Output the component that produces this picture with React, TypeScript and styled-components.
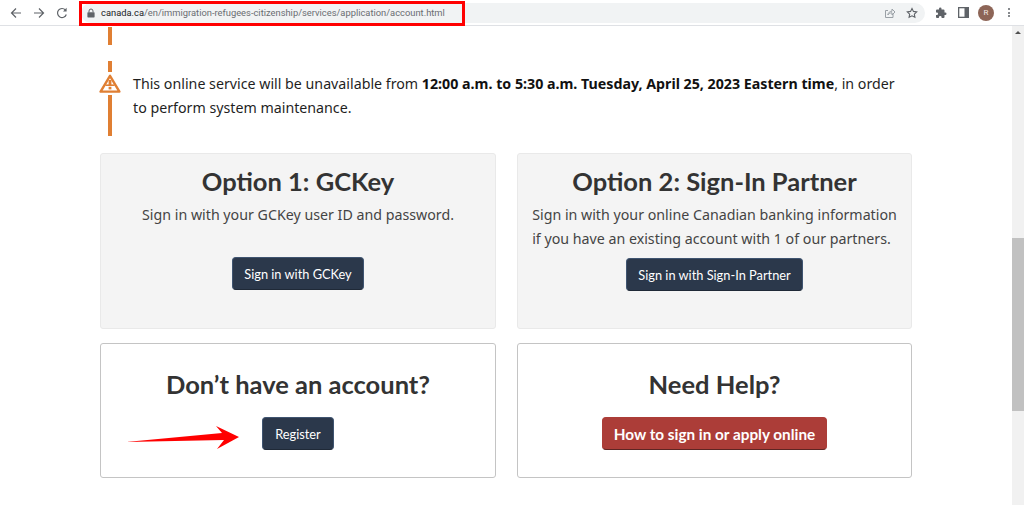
import React from "react";
import styled, { createGlobalStyle } from "styled-components";

const Global = createGlobalStyle`
  html, body { margin: 0; padding: 0; background: #fff; }
  body { width: 1024px; height: 505px; overflow: hidden; font-family: "Noto Sans", sans-serif; }
`;

const Screen = styled.div`
  position: relative;
  width: 1024px;
  height: 505px;
  overflow: hidden;
  display: flex;
  flex-direction: column;
`;

const Toolbar = styled.header`
  height: 26px;
  flex: none;
  display: flex;
  align-items: center;
  box-sizing: border-box;
  border-bottom: 1px solid #dfe1e5;
  background: #fff;
  padding-left: 10px;
`;

const NavGroup = styled.div`
  display: flex;
  align-items: center;
  gap: 11px;
  width: 71px;
  flex: none;
  color: #5f6368;
`;

const AddressBar = styled.div`
  width: 844px;
  height: 20px;
  flex: none;
  border-radius: 10px;
  background: #f1f3f4;
  display: flex;
  align-items: center;
  padding: 0 7px 0 6px;
  box-sizing: border-box;
  color: #5f6368;
`;

const Url = styled.span`
  font: 9.35px/1 Roboto, sans-serif;
  color: #6a6d72;
  margin-left: 6px;
  white-space: nowrap;
  flex: 1;
`;

const Host = styled.b`
  font-weight: 400;
  color: #202124;
`;

const BarActions = styled.div`
  display: flex;
  align-items: center;
  gap: 10px;
`;

const ToolActions = styled.div`
  display: flex;
  align-items: center;
  gap: 11px;
  margin-left: 10px;
  color: #5f6368;
`;

const Avatar = styled.span`
  width: 16px;
  height: 16px;
  border-radius: 50%;
  background: #8d6557;
  color: #f3e9e5;
  font: 8px/16px Roboto, sans-serif;
  text-align: center;
  margin-left: -2px;
`;

const Dots = styled.span`
  display: flex;
  flex-direction: column;
  gap: 1.5px;
  margin-left: 3px;
  & i { width: 2px; height: 2px; border-radius: 50%; background: #5f6368; display: block; }
`;

const Body = styled.div`
  flex: 1;
  display: flex;
  min-height: 0;
`;

const Page = styled.main`
  flex: 1;
  padding: 1px 100px 0 100px;
  box-sizing: border-box;
`;

const Scrollbar = styled.aside`
  width: 12px;
  flex: none;
  background: #f1f1f1;
  display: flex;
  flex-direction: column;
  padding-top: 212px;
  box-sizing: border-box;
  position: relative;
`;

const ScrollArrow = styled.span`
  position: absolute;
  top: 5px;
  left: 3px;
  width: 0;
  height: 0;
  border-left: 3px solid transparent;
  border-right: 3px solid transparent;
  border-bottom: 3px solid #505050;
`;

const ScrollThumb = styled.div`
  height: 173px;
  background: #c1c1c1;
`;

const Notice = styled.section`
  display: flex;
  height: 126px;
`;

const Rail = styled.div`
  width: 22px;
  margin-right: 11px;
  flex: none;
  display: flex;
  flex-direction: column;
  align-items: center;
  padding-right: 2px;
  box-sizing: border-box;
`;

const RailBar = styled.span<{ $h: number; $mb?: number }>`
  width: 4px;
  height: ${(p) => p.$h}px;
  margin-bottom: ${(p) => p.$mb ?? 0}px;
  background: #e07f33;
  display: block;
  flex: none;
`;

const WarnIcon = styled.svg`
  flex: none;
  margin-bottom: 2px;
`;

const NoticeText = styled.p`
  margin: 45px 0 0 0;
  font-size: 14.22px;
  line-height: 24px;
  color: #1f1f1f;
  width: 770px;
  & b { font-weight: 700; color: #111; }
`;

const Grid = styled.div`
  display: grid;
  grid-template-columns: 396px 395px;
  grid-template-rows: 176px 135px;
  column-gap: 21px;
  row-gap: 14px;
`;

const Card = styled.article<{ $filled?: boolean }>`
  box-sizing: border-box;
  border: 1px solid ${(p) => (p.$filled ? "#e9e9e9" : "#c4c4c4")};
  border-radius: 3px;
  background: ${(p) => (p.$filled ? "#f4f4f4" : "#fff")};
  display: flex;
  flex-direction: column;
  align-items: center;
`;

const Title = styled.h2<{ $top: number; $bottom: number }>`
  margin: ${(p) => p.$top}px 0 ${(p) => p.$bottom}px;
  font-family: Lato, sans-serif;
  font-weight: 700;
  font-size: 25.5px;
  line-height: 36px;
  color: #333;
`;

const Lead = styled.p`
  margin: 0;
  font-size: 14.22px;
  line-height: 24px;
  color: #444;
`;

const Button = styled.a<{ $top: number; $danger?: boolean; $pad?: number }>`
  margin-top: ${(p) => p.$top}px;
  box-sizing: border-box;
  height: 33px;
  padding: 0 ${(p) => p.$pad ?? 11}px;
  display: inline-flex;
  align-items: center;
  border-radius: 4px;
  font-family: Lato, sans-serif;
  font-weight: ${(p) => (p.$danger ? 700 : 400)};
  font-size: ${(p) => (p.$danger ? 15.3 : 12.8)}px;
  color: #fff;
  background: ${(p) => (p.$danger ? "#ac3d38" : "#2b384b")};
  border: 1px solid ${(p) => (p.$danger ? "#ac3d38" : "#3f5470")};
  border-bottom-color: ${(p) => (p.$danger ? "#5e2523" : "#1f2937")};
`;

const Highlight = styled.div`
  position: absolute;
  left: 79px;
  top: 1px;
  width: 386px;
  height: 25px;
  box-sizing: border-box;
  border: 3px solid #f00;
  pointer-events: none;
`;

const ArrowMark = styled.svg`
  position: absolute;
  left: 125px;
  top: 426px;
`;

const Back = () => (
  <svg width="12" height="12" viewBox="0 0 12 12" fill="none" stroke="currentColor" strokeWidth="1.2"><path d="M11 6H1.5M6 1.5 1.5 6 6 10.5" /></svg>
);
const Forward = () => (
  <svg width="12" height="12" viewBox="0 0 12 12" fill="none" stroke="currentColor" strokeWidth="1.2"><path d="M1 6h9.5M6 1.5 10.5 6 6 10.5" /></svg>
);
const Reload = () => (
  <svg width="12" height="12" viewBox="0 0 12 12" fill="none" stroke="currentColor" strokeWidth="1.2"><path d="M10.3 7.5A4.5 4.5 0 1 1 9.4 3" /><path d="M10.6 .8v3.6H7z" fill="currentColor" stroke="none" /></svg>
);
const Lock = () => (
  <svg width="8" height="10" viewBox="0 0 8 10"><path d="M1 4.2h6a.6.6 0 0 1 .6.6v4a.6.6 0 0 1-.6.6H1a.6.6 0 0 1-.6-.6v-4a.6.6 0 0 1 .6-.6z" fill="currentColor" /><path d="M2 4.2V3a2 2 0 0 1 4 0v1.2" fill="none" stroke="currentColor" /></svg>
);
const Share = () => (
  <svg width="12" height="12" viewBox="0 0 12 12" fill="none" stroke="#9aa0a6" strokeWidth="1"><path d="M9 6.5v4H1.5V3.5H4" /><path d="M3.8 8C4.2 5.5 6 4.2 8 4.2V2l3 3-3 3V5.8C6.2 5.8 5 6.5 3.8 8z" /></svg>
);
const Star = () => (
  <svg width="12" height="12" viewBox="0 0 24 24" fill="none" stroke="currentColor" strokeWidth="2.2"><path d="m12 2.8 2.9 6 6.5.9-4.7 4.5 1.1 6.5-5.8-3.1-5.8 3.1 1.1-6.5-4.7-4.5 6.5-.9z" /></svg>
);
const Puzzle = () => (
  <svg width="12" height="12" viewBox="0 0 24 24" fill="currentColor"><path d="M20.5 11H19V7a2 2 0 0 0-2-2h-4V3.5a2.5 2.5 0 0 0-5 0V5H4a2 2 0 0 0-2 2v3.8h1.5a2.7 2.7 0 0 1 0 5.4H2V20a2 2 0 0 0 2 2h3.8v-1.5a2.7 2.7 0 0 1 5.4 0V22H17a2 2 0 0 0 2-2v-4h1.5a2.5 2.5 0 0 0 0-5z" /></svg>
);
const SidePanel = () => (
  <svg width="11" height="11" viewBox="0 0 11 11"><path d="M0 0h11v11H0z" fill="#5f6368" /><path d="M1.3 1.3h5.2v8.4H1.3z" fill="#fff" /></svg>
);
const Warning = () => (
  <WarnIcon width="22" height="19" viewBox="0 0 22 19" fill="none">
    <path d="M11 1.8 1.6 17.6h18.8z" stroke="#e07f33" strokeWidth="2.4" strokeLinejoin="round" />
    <path d="M6.4 11.2h9.2" stroke="#e07f33" strokeWidth="1.6" />
    <rect x="9.6" y="6" width="2.8" height="6" fill="#e07f33" />
    <rect x="9.6" y="12.8" width="2.8" height="2.6" fill="#e07f33" />
  </WarnIcon>
);

export default function App() {
  return (
    <Screen>
      <Global />
      <Toolbar>
        <NavGroup>
          <Back />
          <Forward />
          <Reload />
        </NavGroup>
        <AddressBar>
          <Lock />
          <Url>
            <Host>canada.ca</Host>/en/immigration-refugees-citizenship/services/application/account.html
          </Url>
          <BarActions>
            <Share />
            <Star />
          </BarActions>
        </AddressBar>
        <ToolActions>
          <Puzzle />
          <SidePanel />
          <Avatar>R</Avatar>
          <Dots><i /><i /><i /></Dots>
        </ToolActions>
      </Toolbar>
      <Body>
        <Page>
          <Notice>
            <Rail>
              <RailBar $h={18} $mb={16} />
              <RailBar $h={11} $mb={2} />
              <Warning />
              <RailBar $h={41} />
            </Rail>
            <NoticeText>
              This online service will be unavailable from <b>12:00 a.m. to 5:30 a.m. Tuesday, April 25, 2023 Eastern time</b>, in order<br />to perform system maintenance.
            </NoticeText>
          </Notice>
          <Grid>
            <Card $filled>
              <Title $top={9} $bottom={4}>Option 1: GCKey</Title>
              <Lead>Sign in with your GCKey user ID and password.</Lead>
              <Button $top={30}>Sign in with GCKey</Button>
            </Card>
            <Card $filled>
              <Title $top={9} $bottom={4}>Option 2: Sign-In Partner</Title>
              <Lead>Sign in with your online Canadian banking information<br />if you have an existing account with 1 of our partners.</Lead>
              <Button $top={7}>Sign in with Sign-In Partner</Button>
            </Card>
            <Card>
              <Title $top={22} $bottom={15}>Don’t have an account?</Title>
              <Button $top={0} $pad={12}>Register</Button>
            </Card>
            <Card>
              <Title $top={22} $bottom={15}>Need Help?</Title>
              <Button $top={0} $danger>How to sign in or apply online</Button>
            </Card>
          </Grid>
        </Page>
        <Scrollbar>
          <ScrollArrow />
          <ScrollThumb />
        </Scrollbar>
      </Body>
      <Highlight />
      <ArrowMark width="116" height="24" viewBox="0 0 116 24">
        <path d="M1 16 97 7 91 0 114 11 92 23 99 14z" fill="#f00" />
      </ArrowMark>
    </Screen>
  );
}
